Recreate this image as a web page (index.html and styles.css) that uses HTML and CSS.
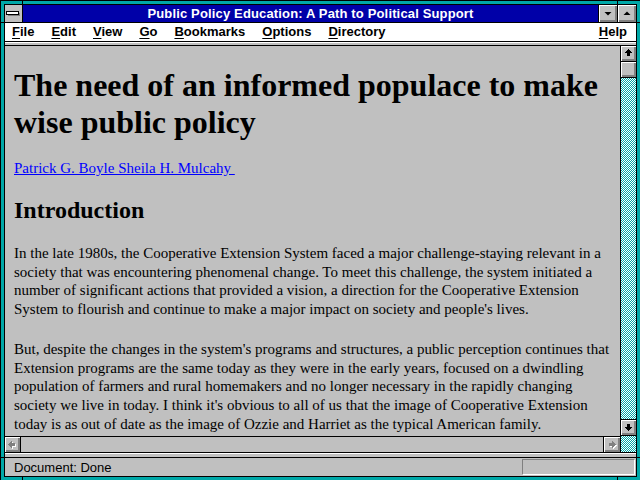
FILE: index.html
```html
<!DOCTYPE html>
<html lang="en">
<head>
    <meta charset="UTF-8">
    <title>Public Policy Education: A Path to Political Support</title>
    <link rel="stylesheet" href="styles.css">
</head>
<body>
<div class="window">
    <!-- resize marks on the frame -->
    <div class="tick tick-v" style="left:21px; top:-1px"></div>
    <div class="tick tick-v" style="left:616px; top:-1px"></div>
    <div class="tick tick-v" style="left:21px; top:475px"></div>
    <div class="tick tick-v" style="left:616px; top:475px"></div>
    <div class="tick tick-h" style="left:-1px; top:21px"></div>
    <div class="tick tick-h" style="left:635px; top:21px"></div>
    <div class="tick tick-h" style="left:-1px; top:456px"></div>
    <div class="tick tick-h" style="left:635px; top:456px"></div>

    <div class="frame">
        <div class="titlebar">
            <div class="sysbox">
                <svg width="17" height="17" shape-rendering="crispEdges">
                    <rect x="3" y="8" width="12" height="3" fill="#808080"/>
                    <rect x="1.5" y="6.5" width="12" height="3" fill="#fff" stroke="#000"/>
                </svg>
            </div>
            <div class="caption">Public Policy Education: A Path to Political Support</div>
            <div class="capbtn bevel">
                <svg width="18" height="17"><polygon points="5.5,7 12.5,7 9,10.5" fill="#000"/></svg>
            </div>
            <div class="capbtn bevel">
                <svg width="18" height="17"><polygon points="5.5,10 12.5,10 9,6.5" fill="#000"/></svg>
            </div>
        </div>

        <div class="menubar">
            <span class="menu-item"><u>F</u>ile</span>
            <span class="menu-item"><u>E</u>dit</span>
            <span class="menu-item"><u>V</u>iew</span>
            <span class="menu-item"><u>G</u>o</span>
            <span class="menu-item"><u>B</u>ookmarks</span>
            <span class="menu-item"><u>O</u>ptions</span>
            <span class="menu-item"><u>D</u>irectory</span>
            <span class="menu-item help"><u>H</u>elp</span>
        </div>

        <div class="edge edge-top"></div>

        <div class="viewer">
            <div class="page">
                <h1 class="doc-title">The need of an informed populace to make<br>wise public policy</h1>
                <p class="authors"><a href="#">Patrick G. Boyle Sheila H. Mulcahy&nbsp;</a></p>
                <h2 class="section">Introduction</h2>
                <p class="body-text">In the late 1980s, the Cooperative Extension System faced a major challenge-staying relevant in a<br>
                    society that was encountering phenomenal change. To meet this challenge, the system initiated a<br>
                    number of significant actions that provided a vision, a direction for the Cooperative Extension<br>
                    System to flourish and continue to make a major impact on society and people's lives.</p>
                <p class="body-text">But, despite the changes in the system's programs and structures, a public perception continues that<br>
                    Extension programs are the same today as they were in the early years, focused on a dwindling<br>
                    population of farmers and rural homemakers and no longer necessary in the rapidly changing<br>
                    society we live in today. I think it's obvious to all of us that the image of Cooperative Extension<br>
                    today is as out of date as the image of Ozzie and Harriet as the typical American family.</p>
            </div>

            <div class="vscroll">
                <div class="sbtn bevel up">
                    <svg width="15" height="15" shape-rendering="crispEdges"><polygon points="7.5,3 12,7 9,7 9,10 6,10 6,7 3,7" fill="#000"/></svg>
                </div>
                <div class="thumb bevel"></div>
                <div class="track"></div>
                <div class="sbtn bevel down">
                    <svg width="15" height="15" shape-rendering="crispEdges"><polygon points="7.5,11 12,7 9,7 9,4 6,4 6,7 3,7" fill="#000"/></svg>
                </div>
            </div>

            <div class="hscroll">
                <div class="sbtn bevel left">
                    <svg width="15" height="15" shape-rendering="crispEdges">
                        <polygon points="4,8.5 8,4.5 8,7 11,7 11,10 8,10 8,12.5" fill="#fff"/>
                        <polygon points="3,7.5 7,3.5 7,6 10,6 10,9 7,9 7,11.5" fill="#808080"/>
                    </svg>
                </div>
                <div class="htrack"></div>
                <div class="sbtn bevel right">
                    <svg width="15" height="15" shape-rendering="crispEdges">
                        <polygon points="13,8.5 9,4.5 9,7 6,7 6,10 9,10 9,12.5" fill="#fff"/>
                        <polygon points="12,7.5 8,3.5 8,6 5,6 5,9 8,9 8,11.5" fill="#808080"/>
                    </svg>
                </div>
            </div>
            <div class="corner"></div>
        </div>

        <div class="edge edge-bottom"></div>

        <div class="statusbar">
            <span class="status-text">Document: Done</span>
            <div class="progress"></div>
        </div>
    </div>
</div>
</body>
</html>
```

FILE: styles.css
```css
/* Window chrome colours */
body {
    margin: 0;
    background: #000;
    overflow: hidden;
}

.window {
    position: relative;
    width: 641px;
    height: 481px;
    box-sizing: border-box;
    border: 1px solid #000;
    padding: 3px;
    background: #00a8a8;
}

.tick {
    position: absolute;
    background: #000;
}

.tick-v {
    width: 1px;
    height: 5px;
}

.tick-h {
    width: 5px;
    height: 1px;
}

.frame {
    height: 100%;
    box-sizing: border-box;
    border: 1px solid #000;
    display: flex;
    flex-direction: column;
    background: #c0c0c0;
}

.bevel {
    background: #c0c0c0;
    box-shadow: inset 1px 1px #fff, inset -1px -1px #808080, inset -2px -2px #808080;
}

.bevel svg {
    display: block;
}

/* Title bar */
.titlebar {
    flex: none;
    display: flex;
    height: 17px;
    border-bottom: 1px solid #000;
    background: #0000a8;
}

.sysbox {
    width: 17px;
    border-right: 1px solid #000;
    background: #c0c0c0;
}

.caption {
    flex: 1;
    color: #fff;
    font: bold 13px "Liberation Sans", Arial, sans-serif;
    letter-spacing: 0.15px;
    line-height: 17px;
    text-align: center;
    white-space: nowrap;
}

.capbtn {
    width: 18px;
    border-left: 1px solid #000;
}

/* Menu bar */
.menubar {
    flex: none;
    display: flex;
    gap: 17px;
    height: 18px;
    padding-left: 7px;
    background: #fff;
    border-bottom: 1px solid #000;
    font: bold 13px "Liberation Sans", Arial, sans-serif;
    line-height: 18px;
    color: #000;
}

.menu-item u {
    text-underline-offset: 2px;
}

.help {
    margin-left: auto;
    padding-right: 9px;
}

/* Strips above and below the document view */
.edge {
    flex: none;
    box-shadow: inset 0 1px #fff;
}

.edge-top {
    height: 3px;
    border-bottom: 1px solid #000;
}

.edge-bottom {
    height: 4px;
    border-top: 1px solid #000;
    border-bottom: 1px solid #000;
}

/* Document view with scrollbars */
.viewer {
    flex: 1;
    min-height: 0;
    display: grid;
    grid-template-columns: 1fr 16px;
    grid-template-rows: 1fr 16px;
}

.page {
    overflow: hidden;
    padding: 0 0 0 9px;
    font-family: "Liberation Serif", "Times New Roman", serif;
    color: #000;
    white-space: nowrap;
}

.doc-title {
    font-size: 32px;
    font-weight: bold;
    line-height: normal;
    margin: 21px 0 0;
}

.authors {
    font-size: 15px;
    line-height: normal;
    margin: 19px 0 0;
}

.authors a {
    color: #0000ff;
}

.section {
    font-size: 24px;
    font-weight: bold;
    line-height: normal;
    margin: 20px 0 0;
}

.body-text {
    font-size: 15px;
    line-height: 18.72px;
    margin: 20px 0 0;
}

.body-text + .body-text {
    margin-top: 21px;
}

.track,
.corner {
    background: repeating-conic-gradient(#fff 0 25%, #00a8a8 0 50%) 0 0 / 2px 2px;
}

.vscroll {
    display: flex;
    flex-direction: column;
    border-left: 1px solid #000;
}

.sbtn {
    flex: none;
    width: 15px;
    height: 15px;
}

.vscroll .up {
    border-bottom: 1px solid #000;
}

.thumb {
    flex: none;
    height: 15px;
    border-bottom: 1px solid #000;
}

.track {
    flex: 1;
}

.vscroll .down {
    border-top: 1px solid #000;
    border-bottom: 1px solid #000;
}

.hscroll {
    display: flex;
    border-top: 1px solid #000;
}

.hscroll .left {
    border-right: 1px solid #000;
}

.hscroll .right {
    border-left: 1px solid #000;
    width: 16px;
}

.htrack {
    flex: 1;
}

.corner {
    border-left: 1px solid #000;
}

/* Status bar */
.statusbar {
    flex: none;
    display: flex;
    align-items: center;
    height: 18px;
    padding-left: 9px;
    font: 13px "Liberation Sans", Arial, sans-serif;
    color: #000;
}

.progress {
    margin-left: auto;
    margin-right: 1px;
    width: 113px;
    height: 16px;
    box-sizing: border-box;
    border: 1px solid;
    border-color: #808080 #fff #fff #808080;
}
```
